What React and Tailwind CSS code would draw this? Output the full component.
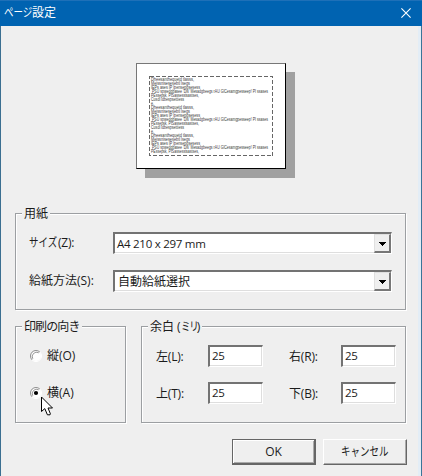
import React from 'react';

const preview = [
  ['Dheesanthequetd tlasss,', 'w-[43px]', ''],
  ['Meissnisesesebtl lsegs', 'w-[39px]', ''],
  ['IEPs ases IP lpensepgsesess', 'w-[49px]', ''],
  ["PSU spwedgbasee 'Dis' Mesadgbeegs rAU GlCesamgpesseep! PI ssases", 'w-[117px]', 'pl-px'],
  ['PEssepsk, PtSassesstsastses,', 'w-[48px]', ''],
  ['Cusdl ldbespsettiess', 'w-[33px]', ''],
  ['e.', 'w-[3px]', ''],
];
const previewLines = [...preview, ...preview, ...preview.slice(0, 5)];

function Line({ text, width, pad }) {
  return (
    <svg className={`block h-[4px] overflow-visible ${width} ${pad}`}>
      <text x="0" y="3.6" textLength="100%" lengthAdjust="spacingAndGlyphs" className="fill-[#3a3a3a] text-[4.8px]">
        {text}
      </text>
    </svg>
  );
}

function Kana({ children, className }) {
  return (
    <span className={`inline-block whitespace-nowrap ${className}`}>
      <span className="inline-block origin-left scale-x-[0.79]">{children}</span>
    </span>
  );
}

function Group({ legend, className, legendClass = '', children }) {
  return (
    <section className={`h-[97px] border border-[#9c9fa2] shadow-[1px_1px_0_#fff,inset_1px_1px_0_#fff] ${className}`}>
      <div className="-mt-[9px] ml-[6px] flex h-[18px]">
        <h2 className={`h-[18px] whitespace-nowrap bg-[#efefef] pl-[2px] leading-[18px] ${legendClass}`}>{legend}</h2>
      </div>
      {children}
    </section>
  );
}

function Combo({ children, textClass }) {
  return (
    <div className="flex h-[22px] w-[279px] border-b border-r border-t-2 border-l-2 border-b-white border-r-white border-t-[#737373] border-l-[#737373] bg-white shadow-[inset_-1px_-1px_0_#dedede]">
      <div className={`flex-1 whitespace-nowrap leading-[20px] ${textClass}`}>{children}</div>
      <div className="flex h-[19px] w-[17px] items-center justify-center border-b-2 border-r-2 border-l border-t border-b-[#777] border-r-[#777] border-l-[#e0e0e0] border-t-[#e0e0e0] bg-[#efefef]">
        <svg className="ml-px mt-px h-[4px] w-[7px]" viewBox="0 0 7 4" shapeRendering="crispEdges">
          <path d="M0 0H7V1H6V2H5V3H4V4H3V3H2V2H1V1H0Z" />
        </svg>
      </div>
    </div>
  );
}

function Field() {
  return (
    <div className="h-[22px] w-[55px] border-b border-r border-l-2 border-t-2 border-b-white border-r-white border-l-[#737373] border-t-[#737373] bg-white pl-[2px] text-[11.5px] leading-[18px] tracking-[-0.4px] shadow-[inset_-1px_-1px_0_#dedede]">
      25
    </div>
  );
}

function Radio({ checked }) {
  return (
    <svg className="h-[12px] w-[12px] shrink-0" viewBox="0 0 12 12">
      <circle cx="6" cy="6" r="5" fill="#fff" />
      <path d="M2.1 9.9A5.5 5.5 0 0 1 9.9 2.1" fill="none" stroke="#909090" />
      <path d="M2.8 8.8A4.4 4.4 0 0 1 8.8 2.8" fill="none" stroke="#808080" strokeWidth=".8" />
      <path d="M9.9 2.1A5.5 5.5 0 0 1 2.1 9.9" fill="none" stroke="#fff" />
      {checked && <circle cx="6" cy="6" r="2.1" fill="#000" />}
    </svg>
  );
}

function Margin({ label, hotkey, className = '' }) {
  return (
    <div className={`flex ${className}`}>
      <span className="mt-[3px] w-[52px] leading-[18px] tracking-[-0.2px]">
        {label}({hotkey}):
      </span>
      <Field />
    </div>
  );
}

export default function App() {
  return (
    <main className="relative flex h-[476px] w-[422px] flex-col overflow-hidden bg-[#efefef] font-['Open_Sans','Noto_Sans_CJK_JP',sans-serif] text-[12px] text-[#1b1b1b]">
      <header className="flex h-[26px] shrink-0 justify-between border-t border-[#1e70b8] bg-[#0063b1] text-white">
        <h1 className="ml-[4px] mt-[3px] whitespace-nowrap leading-[18px]">
          <Kana className="w-[28px]">ページ</Kana>設定
        </h1>
        <svg className="mr-[11px] mt-[7px] h-[10px] w-[10px]" viewBox="0 0 10 10">
          <path d="M.4.4 9.6 9.6M9.6.4.4 9.6" stroke="#fff" strokeWidth="1.1" />
        </svg>
      </header>
      <div className="flex flex-1 flex-col border-l border-r border-l-[#3b6f91] border-r-[#3b7598] pl-[14px] shadow-[inset_-3px_0_0_#e3edf6]">
        <div className="ml-[121px] mt-[37px] h-[106px] w-[150px] border-b border-r border-l border-t border-b-black border-r-black border-l-[#777] border-t-[#777] bg-white pl-[12px] pt-[12px] shadow-[9px_9px_0_#a0a0a0]">
          <div className="relative h-[80px] w-[125px] pl-[2px] pt-[1px] font-['Liberation_Sans',sans-serif]">
            <svg className="absolute left-0 top-0 h-[80px] w-[125px]">
              <rect x=".5" y=".5" width="123" height="79" fill="none" stroke="#666" strokeDasharray="4 2" shapeRendering="crispEdges" />
            </svg>
            {previewLines.map(([text, width, pad], i) => (
              <Line key={i} text={text} width={width} pad={pad} />
            ))}
          </div>
        </div>
        <Group legend="用紙" className="mt-[44px] w-[391px]" legendClass="w-[28px]">
          <div className="mt-[9px] flex pl-[13px]">
            <div className="mt-[2px] w-[84px] whitespace-nowrap leading-[18px]">
              <Kana className="w-[29px]">サイズ</Kana>
              <span className="tracking-[-0.2px]">(Z):</span>
            </div>
            <Combo textClass="pl-[2px] text-[11.5px] tracking-[-0.27px]">A4 210 x 297 mm</Combo>
          </div>
          <div className="mt-[16px] flex pl-[13px]">
            <div className="mt-[2px] w-[84px] whitespace-nowrap leading-[18px]">給紙方法(S):</div>
            <Combo textClass="pl-[3px]">自動給紙選択</Combo>
          </div>
        </Group>
        <div className="mt-[16px] flex gap-[15px]">
          <Group legend="印刷の向き" className="w-[111px]" legendClass="w-[60px] tracking-[-0.9px]">
            <div className="mt-[11px] flex items-center gap-[5px] pl-[14px] leading-[18px]">
              <Radio />
              <span>縦(O)</span>
            </div>
            <div className="mt-[19px] flex items-center gap-[5px] pl-[14px] leading-[18px]">
              <Radio checked />
              <span>横(A)</span>
            </div>
          </Group>
          <Group
            legend={<>余白 (<Kana className="w-[16px]"><span className="tracking-[-1.6px]">ミリ</span></Kana>)</>}
            className="w-[265px]"
            legendClass="w-[54px]"
          >
            <div className="mt-[9px] flex pl-[14px]">
              <Margin label="左" hotkey="L" className="w-[133px]" />
              <Margin label="右" hotkey="R" />
            </div>
            <div className="mt-[15px] flex pl-[14px]">
              <Margin label="上" hotkey="T" className="w-[133px]" />
              <Margin label="下" hotkey="B" />
            </div>
          </Group>
        </div>
        <div className="ml-[217px] mt-[16px] flex gap-[7px]">
          <button className="h-[26px] w-[84px] border border-b-2 border-r-2 border-[#666] text-[12px] leading-[22px] shadow-[inset_1px_1px_0_#fff,inset_-1px_-1px_0_#aaa]">
            OK
          </button>
          <button className="h-[26px] w-[84px] border border-b-[#666] border-r-[#666] border-l-white border-t-white text-left leading-[22px] shadow-[inset_-1px_-1px_0_#aaa]">
            <Kana className="ml-[17px]">キャンセル</Kana>
          </button>
        </div>
      </div>
      <svg className="absolute left-[41px] top-[396px] h-[21px] w-[13px]" viewBox="0 0 13 21">
        <path d="M.5 1V15.5L3.8 12.6 6.4 18.8H9L9.4 17.8 7 12H11.5Z" fill="#fff" stroke="#000" />
      </svg>
    </main>
  );
}
